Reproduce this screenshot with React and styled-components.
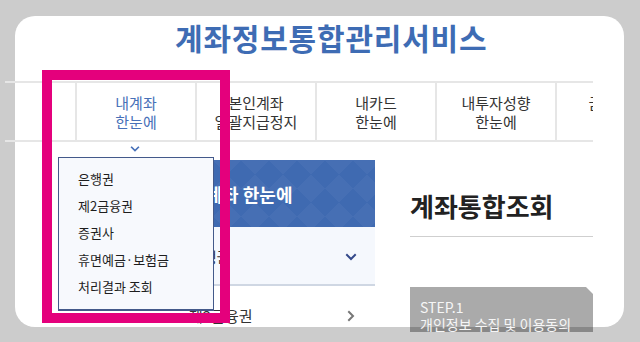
import styled, { createGlobalStyle } from "styled-components";

const GlobalStyle = createGlobalStyle`
  html, body {
    margin: 0;
    padding: 0;
    background: #cccccc;
  }
  body {
    font-family: "Noto Sans CJK KR", "Noto Sans", sans-serif;
    overflow: hidden;
  }
`;

const Page = styled.div`
  width: 640px;
  height: 342px;
  box-sizing: border-box;
  padding: 16px 16px 0 15px;
`;

const Card = styled.div`
  position: relative;
  width: 609px;
  height: 311px;
  background: #fff;
  border-radius: 20px;
`;

const Title = styled.h1`
  margin: 0;
  height: 65px;
  box-sizing: border-box;
  padding: 3px 0 0 160px;
  font-size: 30px;
  line-height: 36px;
  letter-spacing: 0.8px;
  font-weight: 700;
  color: #3e6cb4;
`;

const Nav = styled.nav`
  display: flex;
  margin-left: -10px;
  width: 588px;
  height: 61px;
  box-sizing: border-box;
  padding-left: 70px;
  border-top: 2px solid #e6e6e6;
  border-bottom: 2px solid #e6e6e6;
  overflow: hidden;
`;

const NavItem = styled.a`
  flex: 0 0 120px;
  box-sizing: border-box;
  border-left: 2px solid #e6e6e6;
  display: flex;
  align-items: center;
  justify-content: center;
  text-align: center;
  font-size: 15px;
  line-height: 19px;
  color: ${(p) => (p.$active ? "#4770b8" : "#333")};
  white-space: nowrap;
`;

const Main = styled.div`
  display: flex;
  height: 167px;
  margin-top: 18px;
  padding-left: 156px;
`;

const Sidebar = styled.aside`
  width: 204px;
  height: 100%;
  overflow: hidden;
`;

const Banner = styled.div`
  height: 67px;
  display: flex;
  align-items: center;
  padding-left: 18px;
  background-color: #3f6ab1;
  background-image: linear-gradient(45deg, rgba(255, 255, 255, 0.035) 25%, transparent 25%, transparent 75%, rgba(255, 255, 255, 0.035) 75%),
    linear-gradient(-45deg, rgba(255, 255, 255, 0.035) 25%, transparent 25%, transparent 75%, rgba(255, 255, 255, 0.035) 75%);
  background-size: 28px 28px;
  color: #fff;
  font-size: 18px;
  font-weight: 700;
`;

const SideRow = styled.div`
  height: 59px;
  box-sizing: border-box;
  display: flex;
  align-items: center;
  justify-content: space-between;
  padding: 2px 18px 0;
  background: ${(p) => (p.$open ? "#f5f8fd" : "#fff")};
  border-bottom: 2px solid ${(p) => (p.$open ? "#cfd7e3" : "#fff")};
  font-size: 15px;
  color: #333;
`;

const Content = styled.section`
  width: 183px;
  margin-left: 35px;
`;

const Heading = styled.h2`
  margin: 30px 0 0;
  padding-bottom: 15px;
  border-bottom: 1px solid #cfcfcf;
  font-size: 26px;
  line-height: 31px;
  font-weight: 700;
  color: #222;
`;

const StepBox = styled.div`
  margin-top: 50px;
  height: 45px;
  box-sizing: border-box;
  padding: 12px 10px 0;
  overflow: hidden;
  background: rgba(0, 0, 0, 0.335);
  clip-path: polygon(0 0, calc(100% - 7px) 0, 100% 7px, 100% 100%, 0 100%);
  color: #f6f6f6;
  font-size: 14px;
  line-height: 17px;
  white-space: nowrap;
  span {
    display: block;
  }
`;

const Dropdown = styled.div`
  position: absolute;
  left: 43px;
  top: 126px;
  width: 156px;
`;

const Caret = styled.div`
  display: flex;
  justify-content: center;
  height: 15px;
  padding-top: 2px;
  box-sizing: border-box;
  margin-left: 17px;
  width: 120px;
`;

const MenuList = styled.ul`
  list-style: none;
  margin: 0;
  padding: 7px 0 9px 19px;
  height: 153px;
  box-sizing: border-box;
  background: #f7f9fd;
  border: 1px solid #43598a;
  box-shadow: 0 1px 0 #43598a;
`;

const MenuItem = styled.li`
  font-size: 13px;
  line-height: 27px;
  color: #1e1e1e;
`;

const Highlight = styled.div`
  position: absolute;
  left: 27px;
  top: 54px;
  width: 188px;
  height: 253px;
  box-sizing: border-box;
  border: 10px solid #e4007c;
  pointer-events: none;
`;

const Chevron = ({ dir = "down", color = "#333", size = 12 }) => (
  <svg width={size} height={size} viewBox="0 0 12 12" fill="none">
    <path
      d={dir === "down" ? "M2 4 L6 8 L10 4" : "M4 2 L8 6 L4 10"}
      stroke={color}
      strokeWidth="2"
      strokeLinecap="square"
    />
  </svg>
);

const navItems = [
  ["내계좌", "한눈에"],
  ["본인계좌", "일괄지급정지"],
  ["내카드", "한눈에"],
  ["내투자성향", "한눈에"],
  ["금융정보", "한눈에"],
];

const menu = ["은행권", "제2금융권", "증권사", "휴면예금·보험금", "처리결과 조회"];

export default function App() {
  return (
    <Page>
      <GlobalStyle />
      <Card>
        <Title>계좌정보통합관리서비스</Title>
        <Nav>
          {navItems.map(([a, b], i) => (
            <NavItem key={a} $active={i === 0}>
              {a}
              <br />
              {b}
            </NavItem>
          ))}
        </Nav>
        <Main>
          <Sidebar>
            <Banner>내계좌 한눈에</Banner>
            <SideRow $open>
              은행권
              <Chevron dir="down" color="#34498a" />
            </SideRow>
            <SideRow>
              제2금융권
              <Chevron dir="right" color="#777" />
            </SideRow>
          </Sidebar>
          <Content>
            <Heading>계좌통합조회</Heading>
            <StepBox>
              STEP.1
              <span>개인정보 수집 및 이용동의</span>
            </StepBox>
          </Content>
        </Main>
        <Dropdown>
          <Caret>
            <Chevron dir="down" color="#4770b8" size={10} />
          </Caret>
          <MenuList>
            {menu.map((m) => (
              <MenuItem key={m}>{m}</MenuItem>
            ))}
          </MenuList>
        </Dropdown>
        <Highlight />
      </Card>
    </Page>
  );
}
